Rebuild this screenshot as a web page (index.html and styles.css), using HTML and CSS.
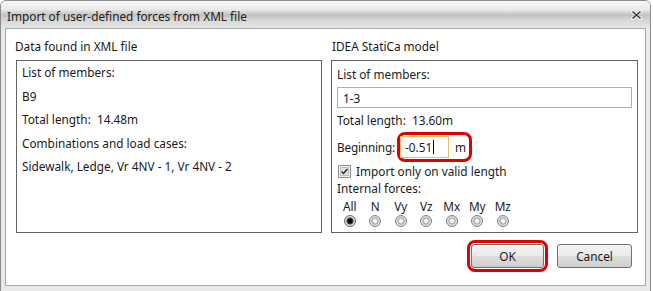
FILE: index.html
```html
<!DOCTYPE html>
<html lang="en">
<head>
  <meta charset="UTF-8">
  <title>Import of user-defined forces from XML file</title>
  <link rel="stylesheet" href="styles.css">
</head>
<body>

<div class="window">
  <div class="titlebar">
    <span class="title">Import of user-defined forces from XML file</span>
    <svg class="close" width="11" height="10" viewBox="0 0 11 10">
      <path d="M1.5 1.5 L9.5 8.5 M9.5 1.5 L1.5 8.5" stroke="#fff" stroke-width="3.2" stroke-linecap="round" opacity="0.8"/>
      <path d="M1.5 1.5 L9.5 8.5 M9.5 1.5 L1.5 8.5" stroke="#3a3a3a" stroke-width="1.6"/>
    </svg>
  </div>

  <div class="client">
    <div class="groups">
      <!-- left: what the xml file contains -->
      <div class="group">
        <div class="group-label">Data found in XML file</div>
        <div class="group-box found">
          <div>List of members:</div>
          <div>B9</div>
          <div>Total length:&nbsp; 14.48m</div>
          <div>Combinations and load cases:</div>
          <div>Sidewalk, Ledge, Vr 4NV - 1, Vr 4NV - 2</div>
        </div>
      </div>

      <!-- right: model settings -->
      <div class="group">
        <div class="group-label">IDEA StatiCa model</div>
        <div class="group-box model">
          <div class="line">List of members:</div>
          <div class="textbox members">1-3</div>
          <div class="line total">Total length:&nbsp; 13.60m</div>
          <div class="begin-row">
            <span class="begin-label">Beginning:</span>
            <span class="mark begin-mark">
              <span class="textbox begin">-0.51<span class="caret"></span></span>
              <span class="unit">m</span>
            </span>
          </div>
          <div class="check-row">
            <svg class="checkbox" width="13" height="13" viewBox="0 0 13 13">
              <rect x="0.5" y="0.5" width="12" height="12" fill="#f4f4f4" stroke="#8e8f8f"/>
              <rect x="2.5" y="2.5" width="8" height="8" fill="#e2e2e2" stroke="#bdbdbd"/>
              <path d="M3.6 6.5 L5.5 8.5 L9.4 3.9" fill="none" stroke="#2b2b2b" stroke-width="1.5"/>
            </svg>
            <span>Import only on valid length</span>
          </div>
          <div class="line small">Internal forces:</div>
          <div class="forces">
            <div class="force"><span>All</span><span class="radio on"></span></div>
            <div class="force"><span>N</span><span class="radio"></span></div>
            <div class="force"><span>Vy</span><span class="radio"></span></div>
            <div class="force"><span>Vz</span><span class="radio"></span></div>
            <div class="force"><span>Mx</span><span class="radio"></span></div>
            <div class="force"><span>My</span><span class="radio"></span></div>
            <div class="force"><span>Mz</span><span class="radio"></span></div>
          </div>
        </div>
      </div>
    </div>

    <div class="buttons">
      <span class="mark ok-mark"><button class="btn ok">OK</button></span>
      <button class="btn cancel">Cancel</button>
    </div>
  </div>
</div>

</body>
</html>
```

FILE: styles.css
```css
* {
  margin: 0;
  padding: 0;
  box-sizing: border-box;
}
body {
  background: #fff;
  font-family: "Noto Sans", "Liberation Sans", sans-serif;
  font-size: 11.8px;
  color: #1a1a1a;
}
.window {
  width: 651px;
  height: 292px;
  border: 1px solid #8c8c8c;
  border-radius: 6px 6px 0 0;
  background: #e9e9e9;
  padding: 0 4px 5px;
  display: flex;
  flex-direction: column;
}
.titlebar {
  height: 27px;
  display: flex;
  align-items: center;
  justify-content: space-between;
  margin: 0 -4px;
  padding: 0 8px 0 6px;
  border-radius: 5px 5px 0 0;
  background: linear-gradient(to bottom, #f6f6f6 0%, #ebebeb 30%, #c2c2c2 52%, #d6d6d6 70%, #e6e6e6 100%);
}
.title {
  color: #222;
  margin-top: 2px;
}
.close {
  margin-top: 1px;
}
.client {
  flex: 1;
  background: #fff;
  border: 1px solid #a9a9a9;
  padding: 9px 7px 0 10px;
}
.groups {
  display: grid;
  grid-template-columns: 306px 307px;
  gap: 9px;
}
.group-label {
  height: 16px;
  line-height: 16px;
  margin-bottom: 6px;
  margin-left: -1px;
}
.group:last-child .group-label {
  margin-left: 1px;
}
.group-box {
  height: 173px;
  border: 1px solid #646464;
  padding: 0 5px;
}
.found div {
  line-height: 23.5px;
}
.model {
  padding-top: 3px;
}
.line {
  line-height: 20px;
}
.textbox {
  display: flex;
  align-items: center;
  height: 21px;
  border: 1px solid #abadb3;
  padding-left: 5px;
}
.members {
  margin-top: 3px;
}
.total {
  margin-top: 2px;
}
.begin-row {
  margin-top: 2px;
  display: flex;
  align-items: center;
  gap: 2px;
}
.begin-label {
  letter-spacing: -0.2px;
}
.mark {
  display: inline-flex;
  align-items: center;
  border: 3px solid #e10000;
  border-radius: 8px;
}
.begin-mark {
  padding: 1px 3px 1px 0;
}
.begin {
  width: 49px;
  height: 22px;
  border-color: #e6c36a;
  padding-left: 4px;
}
.caret {
  display: inline-block;
  width: 1px;
  height: 14px;
  background: #000;
  margin-left: 1px;
}
.unit {
  margin-left: 6px;
}
.check-row {
  margin-top: 1px;
  height: 16px;
  display: flex;
  align-items: center;
  gap: 5px;
  padding-left: 1px;
}
.small {
  margin-top: 1px;
  line-height: 16px;
}
.forces {
  display: flex;
  margin-top: 2px;
}
.force {
  width: 25.5px;
  display: flex;
  flex-direction: column;
  align-items: center;
  line-height: 16px;
}
.radio {
  width: 12px;
  height: 12px;
  margin-top: 1px;
  border-radius: 50%;
  border: 1px solid #858585;
  background: radial-gradient(circle, #f6f6f6 0, #eeeeee 2px, #9c9c9c 3px, #e2e2e2 4px, #cecece 6px);
}
.radio.on {
  border-color: #666;
  background: radial-gradient(circle, #000 0, #111 2.2px, #555 3.2px, #e2e2e2 4px, #cdcdcd 6px);
}
.buttons {
  margin-top: 7px;
  display: flex;
  justify-content: flex-end;
  align-items: center;
  gap: 9px;
  padding-right: 6px;
}
.ok-mark {
  padding: 1px;
}
.btn {
  height: 24px;
  font-family: inherit;
  font-size: 11.8px;
  color: #1a1a1a;
  border: 1px solid #707070;
  border-radius: 3px;
  background: linear-gradient(to bottom, #f3f3f3 0%, #ebebeb 48%, #dddddd 52%, #cfcfcf 100%);
}
.ok {
  width: 73px;
}
.cancel {
  width: 75px;
}
```
